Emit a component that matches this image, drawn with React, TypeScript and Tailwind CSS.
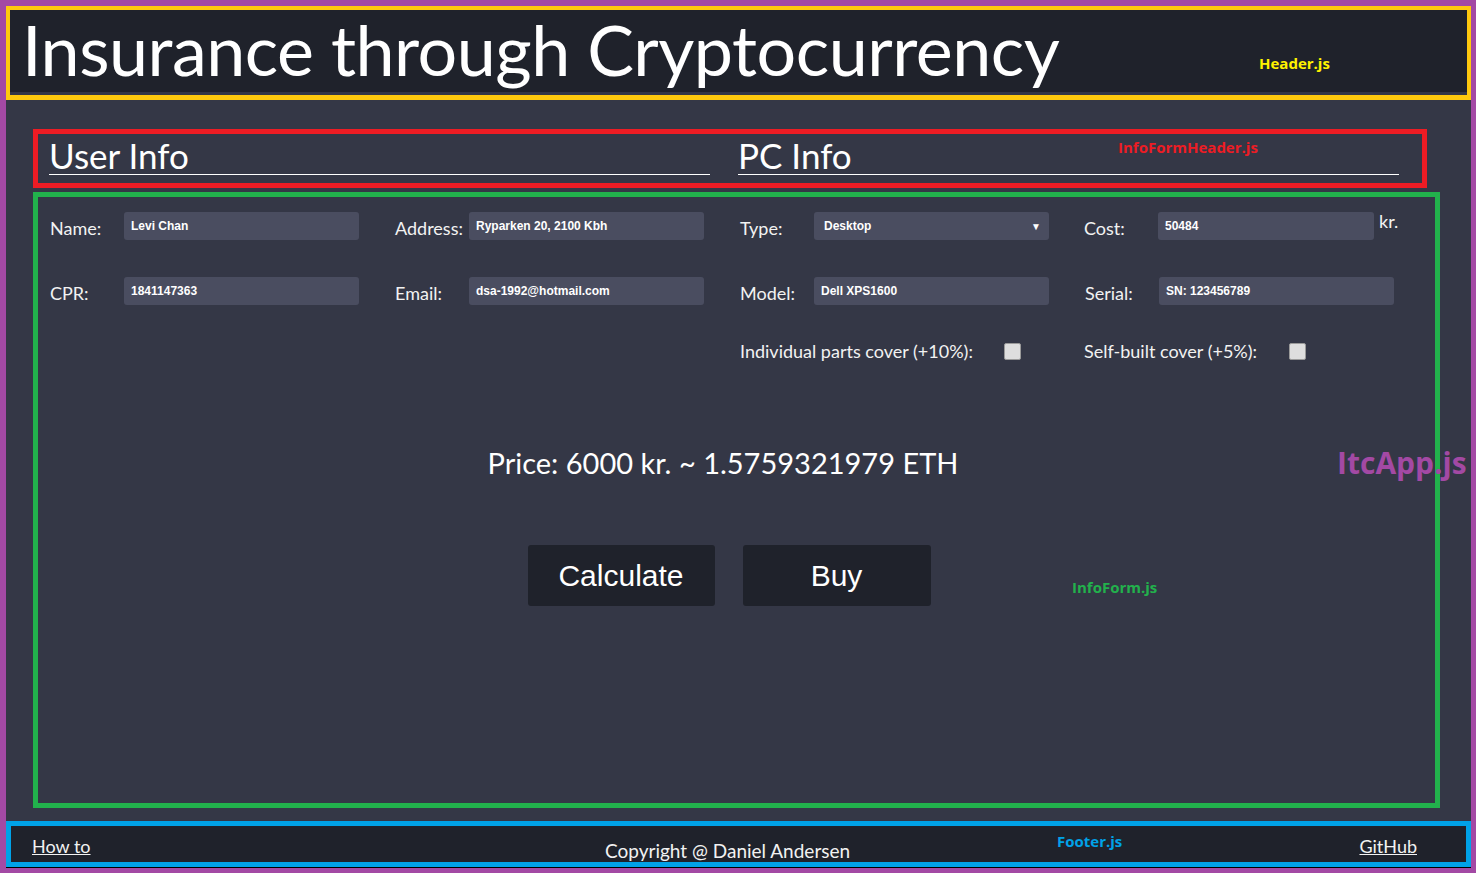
import React from "react";

function Field({ label, value, width = "w-[235px]", suffix }: { label: string; value: string; width?: string; suffix?: string }) {
  return (
    <div className="flex w-[345px] items-start">
      <div className="mt-[5px] w-[74px] text-[18px] leading-[22px] text-[#f2f2f2] font-['Lato',sans-serif]">{label}</div>
      <div className={`${width} flex h-[28px] items-center rounded-[3px] bg-[#4a4d60] pl-[7px] text-[12px] font-bold text-white font-['Liberation_Sans',Arial,sans-serif]`}>
        {value}
      </div>
      {suffix && <div className="ml-[5px] -mt-[2px] text-[18px] leading-[22px] text-[#f2f2f2] font-['Lato',sans-serif]">{suffix}</div>}
    </div>
  );
}

function SelectField({ label, value }: { label: string; value: string }) {
  return (
    <div className="flex w-[344px] items-start">
      <div className="mt-[5px] w-[74px] text-[18px] leading-[22px] text-[#f2f2f2] font-['Lato',sans-serif]">{label}</div>
      <div className="flex h-[28px] w-[235px] items-center justify-between rounded-[3px] bg-[#4a4d60] pl-[10px] pr-[8px] text-[12px] font-bold text-white font-['Liberation_Sans',Arial,sans-serif]">
        <span>{value}</span>
        <span className="text-[10px]">▼</span>
      </div>
    </div>
  );
}

function Check({ label, labelWidth }: { label: string; labelWidth: string }) {
  return (
    <div className="flex items-center">
      <div className={`${labelWidth} text-[18px] leading-[22px] text-[#f2f2f2] font-['Lato',sans-serif]`}>{label}</div>
      <div className="h-[17px] w-[17px] rounded-[2px] border border-[#9a9a9a] bg-[#dedede]" />
    </div>
  );
}

export default function App() {
  return (
    <div className="relative h-[873px] w-full overflow-hidden bg-[#a349a4] pb-[5px] pl-[6px] pr-[5px] pt-[6px]">
      <div className="flex h-full flex-col bg-[#343746]">
        {/* Header */}
        <div className="h-[94px] border-4 border-b-[5px] border-[#ffc90e]">
          <div className="flex h-[82px] items-center bg-[#1f222b] pl-[12px]">
            <h1 className="mt-[-4px] text-[70px] leading-none tracking-[-0.5px] text-white font-['Lato',sans-serif]">
              Insurance through Cryptocurrency
            </h1>
          </div>
          <div className="h-[3px] bg-[#343746]" />
        </div>

        {/* Main */}
        <div className="relative flex-1 pl-[27px] pt-[29px]">
          {/* InfoFormHeader */}
          <div className="flex h-[59px] w-[1394px] gap-[28px] border-[5px] border-[#ed1c24] pl-[11px]">
            <div className="flex h-[41px] w-[661px] items-end border-b border-white text-[35px] leading-none text-white font-['Lato',sans-serif]">
              <span className="mb-[1px]">User Info</span>
            </div>
            <div className="flex h-[41px] w-[661px] items-end border-b border-white text-[35px] leading-none text-white font-['Lato',sans-serif]">
              <span className="mb-[1px]">PC Info</span>
            </div>
          </div>

          {/* InfoForm */}
          <div className="mt-[4px] flex h-[616px] w-[1407px] flex-col border-[5px] border-[#22b14c] pl-[12px] pt-[15px]">
            <div className="flex">
              <Field label="Name:" value="Levi Chan" />
              <Field label="Address:" value="Ryparken 20, 2100 Kbh" />
              <SelectField label="Type:" value="Desktop" />
              <Field label="Cost:" value="50484" width="w-[216px]" suffix="kr." />
            </div>
            <div className="mt-[37px] flex">
              <Field label="CPR:" value="1841147363" />
              <Field label="Email:" value="dsa-1992@hotmail.com" />
              <Field label="Model:" value="Dell XPS1600" />
              <Field label="Serial:" value="SN: 123456789" />
            </div>
            <div className="mt-[35px] flex pl-[690px]">
              <div className="w-[344px]">
                <Check label="Individual parts cover (+10%):" labelWidth="w-[264px]" />
              </div>
              <Check label="Self-built cover (+5%):" labelWidth="w-[205px]" />
            </div>

            <div className="mt-[83px] w-[1370px] pr-[24px] text-center text-[29px] leading-[36px] text-white font-['Lato',sans-serif]">
              Price: 6000 kr. ~ 1.5759321979 ETH
            </div>

            <div className="mt-[64px] flex w-[1370px] justify-center gap-[28px] pr-[12px]">
              <button className="h-[61px] w-[187px] rounded-[3px] bg-[#1f222b] text-[30px] text-white font-['Liberation_Sans',Arial,sans-serif]">
                Calculate
              </button>
              <button className="h-[61px] w-[188px] rounded-[3px] bg-[#1f222b] text-[30px] text-white font-['Liberation_Sans',Arial,sans-serif]">
                Buy
              </button>
            </div>
          </div>

          {/* annotation labels */}
          <div className="absolute left-[1112px] top-[36px] text-[15px] font-bold text-[#ed1c24] font-['Open_Sans',sans-serif]">
            InfoFormHeader.js
          </div>
          <div className="absolute left-[1066px] top-[476px] text-[15px] font-bold text-[#22b14c] font-['Open_Sans',sans-serif]">
            InfoForm.js
          </div>
          <div className="absolute left-[1331px] top-[348px] text-[30px] font-bold leading-none text-[#a349a4] font-['Open_Sans',sans-serif]">
            ItcApp.js
          </div>
        </div>

        {/* Footer */}
        <div className="mt-[13px] h-[46px] border-[5px] border-[#00a2e8] bg-[#1f222b]">
          <div className="relative flex h-full items-center justify-between px-[21px] text-[18px] text-[#f2f2f2] font-['Lato',sans-serif]">
            <a className="mt-[4px] underline" href="#">How to</a>
            <span className="absolute left-[594px] top-[11px] text-[19px]">Copyright @ Daniel Andersen</span>
            <span className="absolute left-[1046px] top-[4px] text-[15px] font-bold text-[#00a2e8] font-['Open_Sans',sans-serif]">Footer.js</span>
            <a className="mr-[28px] mt-[4px] underline" href="#">GitHub</a>
          </div>
        </div>
        <div className="h-px bg-black" />
      </div>
      <div className="absolute left-[1259px] top-[52px] text-[15px] font-bold text-[#fff200] font-['Open_Sans',sans-serif]">
        Header.js
      </div>
    </div>
  );
}
